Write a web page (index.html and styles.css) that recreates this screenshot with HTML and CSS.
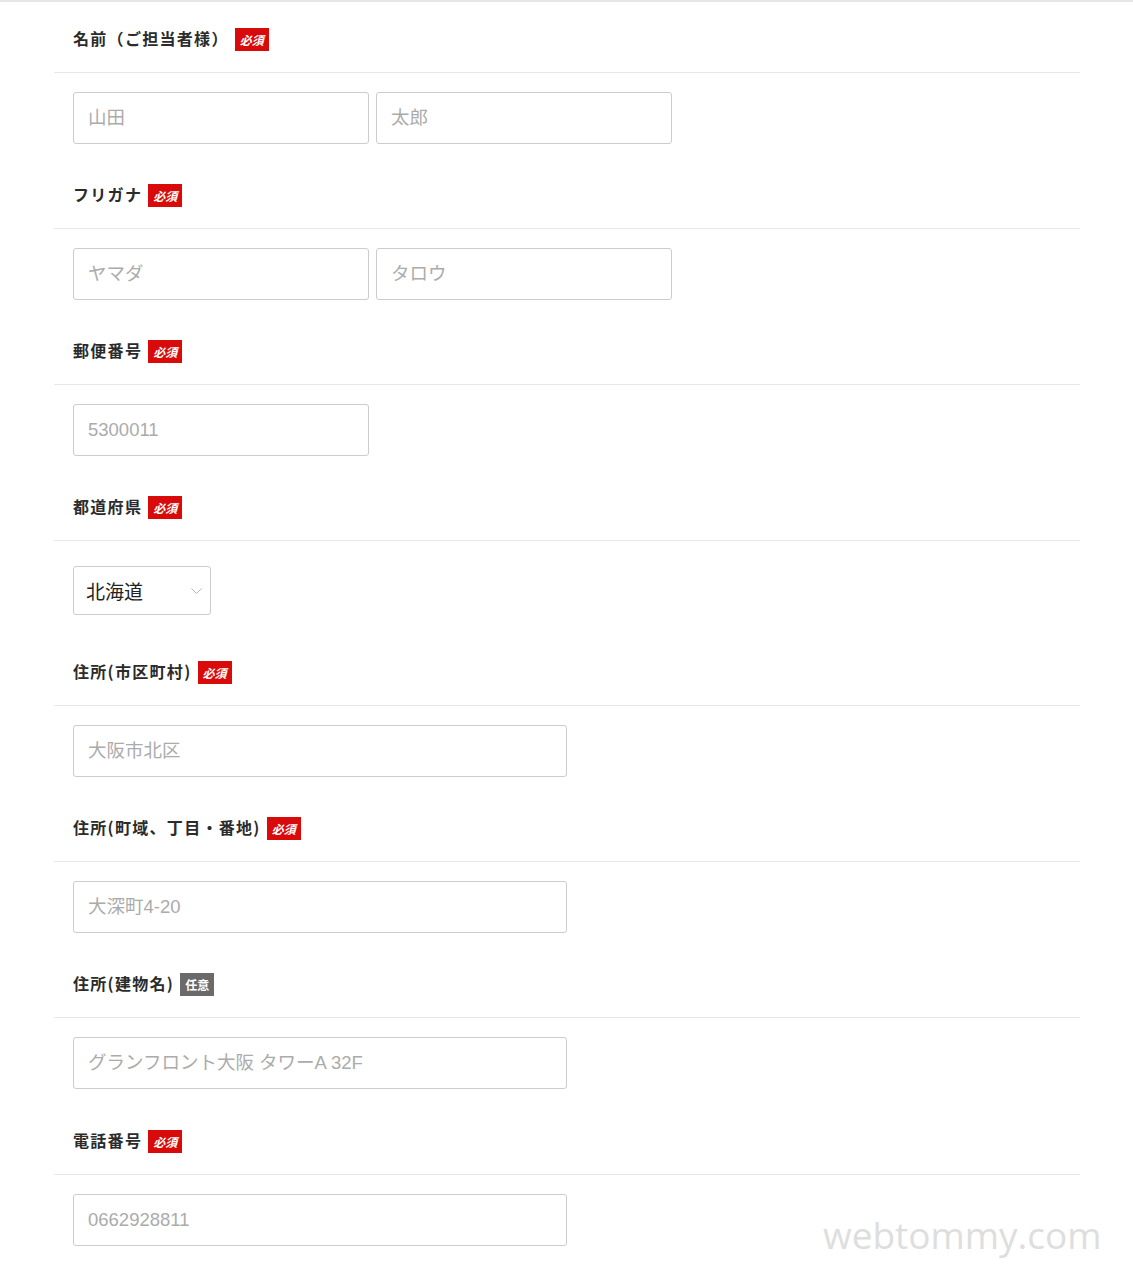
FILE: index.html
```html
<!DOCTYPE html>
<html lang="ja">
<head>
<meta charset="utf-8">
<title>お届け先フォーム</title>
<link rel="stylesheet" href="styles.css">
</head>
<body>
<div class="page">
  <form class="form">
    <section class="field">
      <div class="field-head"><span class="label">名前（ご担当者様）</span><span class="badge">必須</span></div>
      <div class="field-body">
        <input class="input input-half" type="text" placeholder="山田">
        <input class="input input-half" type="text" placeholder="太郎">
      </div>
    </section>
    <section class="field">
      <div class="field-head"><span class="label">フリガナ</span><span class="badge">必須</span></div>
      <div class="field-body">
        <input class="input input-half" type="text" placeholder="ヤマダ">
        <input class="input input-half" type="text" placeholder="タロウ">
      </div>
    </section>
    <section class="field">
      <div class="field-head"><span class="label">郵便番号</span><span class="badge">必須</span></div>
      <div class="field-body">
        <input class="input input-half" type="text" placeholder="5300011">
      </div>
    </section>
    <section class="field">
      <div class="field-head"><span class="label">都道府県</span><span class="badge">必須</span></div>
      <div class="field-body field-body-select">
        <div class="select-wrap">
          <select class="select">
            <option>北海道</option>
            <option>青森県</option>
            <option>大阪府</option>
          </select>
          <svg class="chevron" width="11" height="6" viewBox="0 0 11 6" aria-hidden="true"><path d="M0.5 0.5 L5.5 5.5 L10.5 0.5" fill="none" stroke="#b8b8b8" stroke-width="1"/></svg>
        </div>
      </div>
    </section>
    <section class="field">
      <div class="field-head"><span class="label">住所(市区町村)</span><span class="badge">必須</span></div>
      <div class="field-body">
        <input class="input input-wide" type="text" placeholder="大阪市北区">
      </div>
    </section>
    <section class="field">
      <div class="field-head"><span class="label">住所(町域、丁目・番地)</span><span class="badge">必須</span></div>
      <div class="field-body">
        <input class="input input-wide" type="text" placeholder="大深町4-20">
      </div>
    </section>
    <section class="field">
      <div class="field-head"><span class="label">住所(建物名)</span><span class="badge badge-optional">任意</span></div>
      <div class="field-body field-body-tall">
        <input class="input input-wide" type="text" placeholder="グランフロント大阪 タワーA 32F">
      </div>
    </section>
    <section class="field">
      <div class="field-head"><span class="label">電話番号</span><span class="badge">必須</span></div>
      <div class="field-body">
        <input class="input input-wide" type="text" placeholder="0662928811">
      </div>
    </section>
  </form>
  <div class="watermark">webtommy.com</div>
</div>
</body>
</html>
```
FILE: styles.css
```css
html, body {
  margin: 0;
  padding: 0;
  background: #ffffff;
}

.page {
  position: relative;
  min-height: 1280px;
  border-top: 2px solid #e6e6e6;
  box-sizing: border-box;
  font-family: "Liberation Sans", "Noto Sans CJK JP", sans-serif;
  color: #333333;
  overflow: hidden;
}

.form {
  margin: 0 0 0 54px;
  width: 1026px;
}

.field-head {
  display: flex;
  align-items: center;
  height: 71px;
  box-sizing: border-box;
  padding: 24px 19px 22px;
  border-bottom: 1px solid #e8e8e8;
}

.label {
  font-family: "Noto Sans CJK JP", sans-serif;
  font-size: 16px;
  font-weight: 700;
  letter-spacing: 1.3px;
  line-height: 24px;
  color: #2b2b2b;
}

.badge {
  display: inline-block;
  margin-left: 6px;
  margin-top: 3px;
  height: 23px;
  line-height: 23px;
  padding: 0 5px;
  background: #d80a0a;
  color: #ffffff;
  font-family: "Noto Sans CJK JP", sans-serif;
  font-size: 12px;
  font-weight: 700;
  font-style: italic;
}

.badge-optional {
  background: #6a6a6a;
  font-style: normal;
}

.field-body {
  display: flex;
  gap: 7px;
  padding: 19px 19px 14px;
}

.field-body-select {
  padding: 25px 19px 20px;
}

.field-body-tall {
  padding-bottom: 15px;
}

.input {
  box-sizing: border-box;
  height: 52px;
  margin: 0;
  padding: 0 14px;
  border: 1px solid #cccccc;
  border-radius: 3px;
  background: #ffffff;
  font-family: "Liberation Sans", "Noto Sans CJK JP", sans-serif;
  font-size: 18.5px;
  color: #333333;
  outline: none;
}

.input::placeholder {
  color: #ababab;
}

.input-half {
  width: 296px;
}

.input-wide {
  width: 494px;
}

.select-wrap {
  position: relative;
  display: inline-block;
}

.select {
  appearance: none;
  -webkit-appearance: none;
  box-sizing: border-box;
  width: 138px;
  height: 49px;
  margin: 0;
  padding: 0 30px 0 12px;
  border: 1px solid #cccccc;
  border-radius: 3px;
  background: #ffffff;
  font-family: "Noto Sans CJK JP", sans-serif;
  font-size: 19px;
  color: #222222;
  outline: none;
}

.chevron {
  position: absolute;
  right: 9px;
  top: 22px;
  pointer-events: none;
}

.watermark {
  position: absolute;
  left: 823px;
  top: 1214px;
  font-family: "Open Sans", sans-serif;
  font-size: 37px;
  line-height: 37px;
  color: #dedede;
}
```
